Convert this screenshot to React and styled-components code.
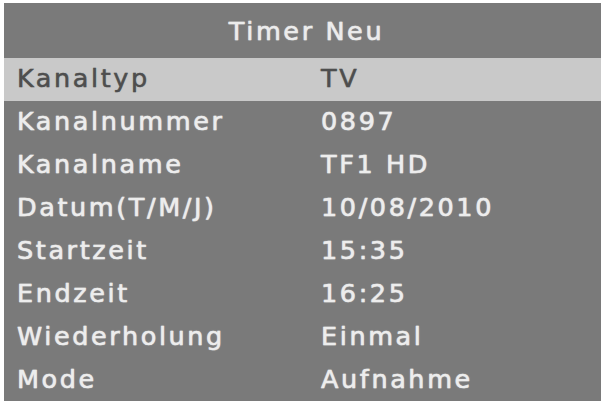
import React from "react";
import styled, { createGlobalStyle } from "styled-components";

const Global = createGlobalStyle`
  html, body { margin: 0; padding: 0; background: #ffffff; }
  body { width: 601px; height: 401px; overflow: hidden; }
`;

const Screen = styled.div`
  margin: 3px 0 0 4px;
  width: 597px;
  height: 398px;
  background: #7a7a7a;
  display: flex;
  flex-direction: column;
  font-family: "DejaVu Sans", "Verdana", sans-serif;
  overflow: hidden;
`;

const Title = styled.div`
  height: 55px;
  flex: 0 0 55px;
  display: flex;
  align-items: center;
  justify-content: center;
  color: #ececec;
  font-size: 25.5px;
  letter-spacing: 2.6px;
  padding: 0 0 0 8px;
  box-sizing: border-box;
  -webkit-text-stroke: 0.4px #ececec;
  text-shadow: 0 0 1px rgba(255,255,255,0.6), 0 0 2px rgba(255,255,255,0.25);
`;

const Row = styled.div`
  height: 43px;
  flex: 0 0 43px;
  display: grid;
  grid-template-columns: 304px 1fr;
  align-items: center;
  padding-left: 13px;
  padding-bottom: 3px;
  box-sizing: border-box;
  background: ${(p) => (p.$active ? "#c9c9c9" : "transparent")};
  color: ${(p) => (p.$active ? "#4e4e4e" : "#ededed")};
  -webkit-text-stroke: 0.4px ${(p) => (p.$active ? "#4e4e4e" : "#ededed")};
  font-size: 25.5px;
  letter-spacing: 2.6px;
  text-shadow: ${(p) =>
    p.$active
      ? "0 0 1px rgba(60,60,60,0.5)"
      : "0 0 1px rgba(255,255,255,0.6), 0 0 2px rgba(255,255,255,0.25)"};
`;

const Label = styled.span`
  white-space: nowrap;
`;

const Value = styled.span`
  white-space: nowrap;
`;

const items = [
  ["Kanaltyp", "TV"],
  ["Kanalnummer", "0897"],
  ["Kanalname", "TF1 HD"],
  ["Datum(T/M/J)", "10/08/2010"],
  ["Startzeit", "15:35"],
  ["Endzeit", "16:25"],
  ["Wiederholung", "Einmal"],
  ["Mode", "Aufnahme"],
];

export default function App() {
  return (
    <>
      <Global />
      <Screen>
        <Title>Timer Neu</Title>
        {items.map(([l, v], i) => (
          <Row key={l} $active={i === 0}>
            <Label>{l}</Label>
            <Value>{v}</Value>
          </Row>
        ))}
      </Screen>
    </>
  );
}
